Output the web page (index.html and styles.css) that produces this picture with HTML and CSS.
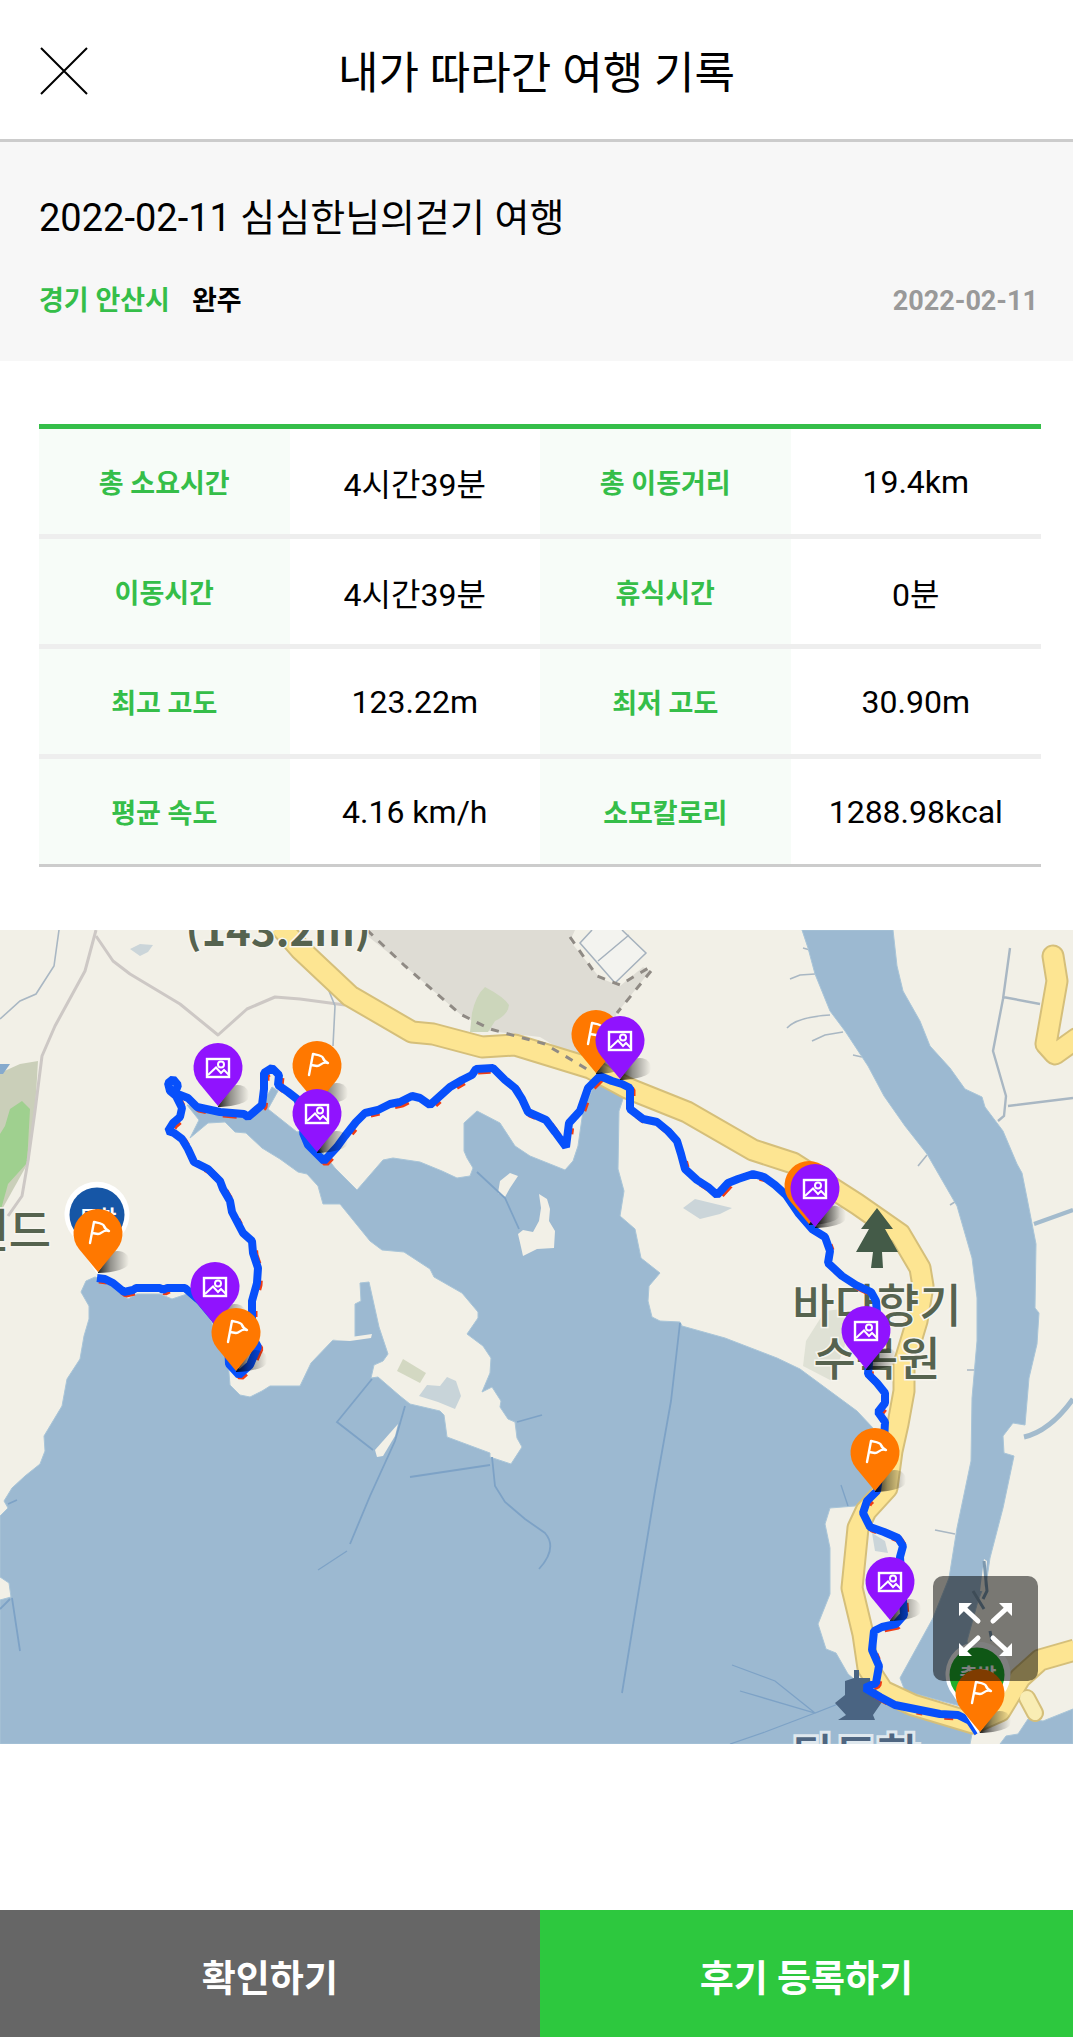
FILE: index.html
```html
<!doctype html>
<html lang="ko">
  <head>
    <meta charset="UTF-8" />
    <meta name="viewport" content="width=device-width, initial-scale=1.0" />
    <title>내가 따라간 여행 기록</title>
    <link rel="stylesheet" href="styles.css">
  </head>
  <body>
    <header class="header">
      <button type="button" class="close-button" aria-label="닫기">
        <svg viewBox="0 0 48 48" aria-hidden="true">
          <path d="M1 1 L47 47 M47 1 L1 47" />
        </svg>
      </button>
      <h1>내가 따라간 여행 기록</h1>
    </header>

    <main>
      <section class="summary">
        <h2>2022-02-11 심심한님의걷기 여행</h2>
        <div class="meta">
          <span class="region">경기 안산시</span>
          <span class="status">완주</span>
          <time class="date" datetime="2022-02-11">2022-02-11</time>
        </div>
      </section>

      <table class="record">
        <tbody>
          <tr>
            <th scope="row">총 소요시간</th>
            <td>4시간39분</td>
            <th scope="row">총 이동거리</th>
            <td>19.4km</td>
          </tr>
          <tr>
            <th scope="row">이동시간</th>
            <td>4시간39분</td>
            <th scope="row">휴식시간</th>
            <td>0분</td>
          </tr>
          <tr>
            <th scope="row">최고 고도</th>
            <td>123.22m</td>
            <th scope="row">최저 고도</th>
            <td>30.90m</td>
          </tr>
          <tr>
            <th scope="row">평균 속도</th>
            <td>4.16 km/h</td>
            <th scope="row">소모칼로리</th>
            <td>1288.98kcal</td>
          </tr>
        </tbody>
      </table>

      <div class="map">
        <svg class="map-canvas" viewBox="0 929 1073 814" role="img" aria-label="이동 경로 지도">
          <defs>
            <linearGradient id="shade" x1="0" y1="0" x2="1" y2="0">
              <stop offset="0" stop-color="#000" stop-opacity="0.85" />
              <stop offset="0.4" stop-color="#000" stop-opacity="0.4" />
              <stop offset="1" stop-color="#000" stop-opacity="0" />
            </linearGradient>
            <path id="pin" d="M0 0 L-19 -23 A24.5 24.5 0 1 1 19 -23 Z" />
            <path id="pin-shadow" d="M0 0 L14 -20 C26 -24 34 -15 30 -7 C28 -3 14 1 0 1 Z" fill="url(#shade)" />
            <g id="photo">
              <use href="#pin-shadow" />
              <use href="#pin" fill="#9013fe" />
              <g fill="none" stroke="#fff" stroke-width="2.4">
                <rect x="-11" y="-47" width="22" height="18" />
                <circle cx="3" cy="-41.5" r="3" stroke-width="2" />
                <path d="M-10 -31 L-2 -38.5 L3 -33 L6 -36 L11 -31" stroke-width="2" />
              </g>
            </g>
            <g id="flag">
              <use href="#pin-shadow" />
              <use href="#pin" fill="#ff7800" />
              <path d="M-8 -29 L-4 -50 C0 -49 5 -49 6 -46 C7 -43 9 -42 11 -41 C5 -43 4 -38 0 -38 L-6 -39" fill="none" stroke="#fff" stroke-width="2.4" stroke-linecap="round" stroke-linejoin="round" />
            </g>
            <path id="badge" d="M0 59 L-25 20 A32.5 32.5 0 1 1 25 20 Z" fill="#fff" />

            <path id="track" d="M97 1277 L105 1278 L113 1282 L124 1291 L133 1289 L136 1287 L160 1287 L163 1289 L167 1287 L185 1287 L200 1300 L215 1318 L228 1340 L229 1363 L239 1374 L250 1364 L256 1350 L258 1346 L252 1335 L252 1300 L257 1282 L258 1267 L253 1252 L252 1240 L243 1232 L232 1211 L230 1200 L223 1188 L220 1180 L208 1168 L194 1161 L188 1148 L182 1138 L174 1132 L168 1130 L173 1122 L180 1116 L182 1107 L176 1095 L170 1090 L168 1082 L173 1078 L178 1084 L175 1092 L188 1097 L197 1106 L220 1111 L244 1113 L248 1116 L262 1104 L264 1088 L264 1072 L272 1067 L279 1074 L278 1084 L288 1091 L297 1098 L307 1120 L303 1132 L308 1144 L324 1160 L337 1146 L345 1135 L356 1121 L365 1112 L378 1109 L390 1103 L400 1101 L412 1095 L420 1097 L430 1104 L440 1095 L450 1086 L462 1079 L472 1074 L476 1068 L493 1067 L505 1079 L515 1087 L522 1098 L528 1111 L546 1119 L555 1131 L566 1146 L569 1122 L580 1110 L588 1087 L600 1075 L612 1080 L622 1083 L630 1087 L630 1108 L643 1118 L657 1121 L668 1130 L677 1140 L681 1153 L685 1168 L697 1179 L708 1186 L717 1194 L728 1182 L738 1178 L753 1173 L764 1176 L775 1184 L786 1194 L799 1213 L812 1228 L825 1236 L830 1250 L828 1262 L842 1275 L856 1284 L871 1291 L876 1300 L878 1325 L870 1350 L868 1373 L877 1382 L885 1392 L885 1402 L878 1411 L885 1421 L884 1440 L877 1490 L867 1500 L863 1512 L870 1526 L884 1531 L898 1537 L903 1545 L900 1556 L903 1600 L904 1614 L896 1623 L882 1626 L874 1630 L872 1649 L879 1665 L876 1682 L865 1687 L880 1696 L895 1704 L915 1708 L940 1713 L958 1714 L970 1720 L978 1732" />
          </defs>

          <!-- land -->
          <rect x="0" y="929" width="1073" height="814" fill="#f2f0e7" />
          <path d="M360 929 L405 965 L460 1013 L490 1030 L540 1036 L590 1066 L617 1012 L650 970 L643 966 L620 985 L600 977 L570 940 L575 929 Z" fill="#dedcd4" />
          <path d="M592 929 L580 942 L615 982 L646 952 L622 929 Z" fill="#f3f3ef" />
          <path d="M592 929 L580 942 L615 982 L646 952 L622 929 M598 960 L629 934" fill="none" stroke="#a5b1bd" stroke-width="1.5" />
          <path d="M485 986 Q476 994 472 1012 L470 1031 L488 1031 L495 1020 Q508 1014 509 1004 Q504 996 485 986 Z" fill="#ccd6bb" />
          <path d="M0 1072 L20 1063 L38 1060 L35 1110 L29 1160 L0 1212 Z" fill="#cacfb9" />
          <path d="M5 1125 L10 1108 L22 1100 L30 1108 L27 1162 L8 1183 L0 1212 L0 1133 Z" fill="#9fd08f" />
          <path d="M0 1063 L10 1063 L3 1073 L0 1073 Z" fill="#86aacd" />
          <path d="M130 948 L140 943 L153 944 L148 951 L140 955 Z M683 1207 L695 1198 L732 1207 L720 1213 L700 1218 Z M872 1532 L885 1540 L888 1552 L875 1550 Z" fill="#cbd5d9" />
          <path d="M825 1310 L842 1308 L850 1330 L832 1380 L803 1365 L806 1340 Z" fill="#dfe1d5" />

          <!-- minor roads and streams -->
          <g fill="none" stroke="#cdc8c5" stroke-width="3" stroke-linejoin="round">
            <path d="M96 929 L85 970 L55 1025 L42 1055 L35 1110 L28 1160 L22 1195 L8 1215" />
            <path d="M96 935 L113 960 L130 973 L180 1003 L218 1034 L247 1008 L275 996 L300 998 L345 1004" />
          </g>
          <g fill="none" stroke="#a9b7c3" stroke-width="1.6">
            <path d="M59 929 L54 965 L36 993 L20 1000 L0 1018" />
            <path d="M327 985 L335 1005 L333 1045" />
            <path d="M790 978 L800 974 L815 973 M787 1027 Q797 1016 830 1014 M812 1040 L825 1034 L843 1031 M803 947 L810 949 M853 1054 L862 1056" />
            <path d="M1010 947 L1003 998 L993 1050 L1006 1095 L1004 1115 L998 1120 M1003 996 L1040 1003 M1008 1105 L1073 1097" stroke-width="2.4" />
            <path d="M935 1529 L955 1533 M918 1165 L927 1154 M950 1204 L958 1199 M967 1369 L976 1369" />
          </g>
          <g fill="none" stroke="#a3bbcd" stroke-width="5">
            <path d="M1034 1223 L1073 1209" stroke-width="4" />
            <path d="M1024 1436 Q1050 1430 1073 1398" />
          </g>

          <!-- sea -->
          <g fill="#9cb9d1" stroke="#a9c5d8" stroke-width="1">
            <path d="M0 1743 L0 1599 L11 1596 L9 1582 L0 1576 L0 1515 L8 1507 L4 1500 L12 1487 L25 1475 L40 1463 L45 1450 L44 1435 L53 1420 L62 1405 L67 1378 L80 1358 L84 1335 L89 1318 L89 1305 L81 1291 L86 1280 L95 1276 L104 1279 L118 1291 L128 1298 L137 1293 L160 1293 L172 1298 L190 1292 L205 1305 L215 1330 L228 1360 L230 1384 L240 1394 L250 1396 L262 1390 L270 1385 L300 1385 L311 1362 L333 1339 L355 1338 L355 1303 L361 1300 L360 1282 L369 1281 L379 1326 L388 1353 L383 1360 L374 1364 L371 1377 L378 1376 L400 1395 L410 1403 L440 1410 L444 1414 L447 1436 L490 1452 L490 1456 L511 1463 L522 1446 L517 1437 L515 1421 L508 1418 L500 1406 L501 1400 L492 1386 L482 1391 L490 1372 L491 1357 L483 1345 L467 1333 L478 1317 L478 1311 L462 1292 L434 1276 L430 1268 L404 1251 L382 1249 L370 1240 L340 1203 L323 1203 L318 1185 L307 1173 L298 1171 L280 1158 L262 1147 L246 1132 L235 1131 L225 1121 L208 1122 L190 1137 L199 1119 L187 1104 L218 1110 L248 1114 L262 1104 L272 1086 L278 1090 L268 1108 L297 1131 L305 1128 L335 1167 L357 1189 L383 1159 L393 1157 L420 1161 L442 1170 L457 1177 L470 1175 L473 1167 L467 1157 L464 1150 L464 1122 L477 1110 L500 1122 L515 1145 L530 1155 L565 1169 L573 1160 L578 1145 L583 1110 L597 1078 L625 1092 L619 1110 L618 1168 L624 1190 L620 1215 L635 1228 L641 1257 L660 1272 L649 1285 L648 1300 L652 1316 L660 1320 L680 1321 L682 1325 L725 1337 L777 1357 L800 1368 L857 1410 L873 1427 L890 1450 L886 1490 L855 1505 L830 1507 L825 1523 L830 1547 L830 1593 L818 1623 L826 1648 L836 1652 L848 1673 L880 1700 L973 1728 L970 1743 Z" />
            <path d="M802 929 L808 947 L815 973 L830 1010 L845 1030 L868 1065 L884 1095 L905 1125 L927 1153 L957 1205 L972 1257 L977 1297 L977 1340 L972 1397 L971 1460 L957 1527 L949 1577 L933 1617 L900 1677 L905 1690 L960 1705 L975 1690 L967 1640 L978 1600 L987 1577 L990 1557 L1003 1507 L1014 1455 L1004 1452 L1003 1435 L1013 1422 L1025 1424 L1029 1377 L1037 1343 L1039 1312 L1035 1307 L1036 1243 L1027 1197 L1022 1172 L1017 1163 L1003 1130 L985 1106 L982 1096 L965 1088 L950 1067 L930 1045 L920 1020 L903 990 L897 965 L893 929 Z" />
            <path d="M1000 1743 L1006 1735 L1018 1733 L1028 1718 L1043 1720 L1073 1708 L1073 1743 Z" />
          </g>

          <!-- islets and breakwaters -->
          <g fill="#f2f0e7">
            <path d="M500 1180 L510 1172 L518 1175 L510 1187 L505 1196 L498 1192 Z" />
            <path d="M539 1193 L547 1198 L550 1208 L549 1220 L555 1230 L554 1247 L537 1248 L523 1255 L521 1246 L518 1233 L523 1229 L533 1231 L539 1220 L541 1207 Z" />
            <path d="M398 1423 L395 1435 L383 1455 L377 1456 L375 1449 Z" />
            <path d="M330 1339 L372 1333 L371 1337 L350 1340 Z" />
            <path d="M984 1558 L987 1560 L984 1590 L980 1590 Z" />
          </g>
          <path d="M403 1358 L426 1372 L420 1382 L397 1370 Z" fill="#d3d8c2" />
          <path d="M419 1395 L427 1384 L440 1385 L447 1376 L456 1380 L461 1395 L455 1408 L438 1401 Z" fill="#c8d4d9" />
          <g fill="none" stroke="#7da2c6" stroke-width="1.8">
            <path d="M405 1405 L395 1440 L370 1495 L350 1543" />
            <path d="M347 1550 L318 1569" stroke-width="1.2" />
            <path d="M372 1378 L337 1421 L373 1449" />
            <path d="M490 1464 L410 1476" />
            <path d="M492 1456 L495 1485 L505 1501 L525 1518 L545 1532 Q558 1547 539 1568" />
            <path d="M517 1421 L542 1414" />
            <path d="M680 1322 L671 1400 L655 1490 L637 1600 L622 1692" />
            <path d="M477 1171 L505 1197 L519 1228" />
            <path d="M732 1664 L775 1680 L815 1712 M740 1690 L815 1712 L838 1703 M730 1743 L765 1731 L815 1712" stroke-width="1.3" />
            <path d="M841 1484 L848 1505" stroke-width="1.3" />
            <path d="M12 1597 L20 1650 M10 1598 L0 1608 M8 1503 L17 1499" />
          </g>
          <path d="M984 1560 L987 1590 L983 1598 M973 1590 L984 1608 M990 1630 L992 1640" fill="none" stroke="#7c98ae" stroke-width="3" />

          <!-- main roads -->
          <g fill="none" stroke-linejoin="round">
            <g stroke="#d5bf7a" stroke-width="23">
              <path d="M280 925 L300 948 L350 995 L412 1031 L433 1033 L482 1046 L515 1044 L590 1067 L627 1087 L687 1111 L753 1149 L793 1162 L857 1203 L900 1233 L920 1267 L923 1285 L917 1320 L904 1363 L904 1390 L898 1423 L892 1450 L887 1487 L866 1510 L858 1527 L852 1587 L863 1633 L868 1667 L883 1690 L913 1704 L973 1722 L1000 1710 L1020 1677 L1040 1659 L1075 1649" />
              <path d="M1053 955 L1057 980 L1050 1020 L1046 1043 L1055 1053 L1076 1038" stroke-linecap="round" />
              <path d="M1027 1697 L1035 1712" stroke-width="18" stroke-linecap="round" />
            </g>
            <g stroke="#fde592" stroke-width="19">
              <path d="M280 925 L300 948 L350 995 L412 1031 L433 1033 L482 1046 L515 1044 L590 1067 L627 1087 L687 1111 L753 1149 L793 1162 L857 1203 L900 1233 L920 1267 L923 1285 L917 1320 L904 1363 L904 1390 L898 1423 L892 1450 L887 1487 L866 1510 L858 1527 L852 1587 L863 1633 L868 1667 L883 1690 L913 1704 L973 1722 L1000 1710 L1020 1677 L1040 1659 L1075 1649" />
              <path d="M1053 955 L1057 980 L1050 1020 L1046 1043 L1055 1053 L1076 1038" stroke-linecap="round" />
              <path d="M1027 1697 L1035 1712" stroke="#f9edb4" stroke-width="14" stroke-linecap="round" />
            </g>
          </g>
          <g fill="none" stroke="#8f8a84" stroke-width="3" stroke-dasharray="8 8">
            <path d="M367 929 L405 965 L460 1013 L490 1028 L545 1043 L590 1070" />
            <path d="M570 936 L597 975 L620 984 L650 966" />
            <path d="M651 970 L617 1012" />
          </g>

          <!-- place names -->
          <g class="map-label">
            <text x="278" y="945" font-size="42" font-weight="700" text-anchor="middle">(143.2m)</text>
            <text x="51" y="1246" text-anchor="end">랜드</text>
            <text x="877" y="1321" text-anchor="middle">바다향기</text>
            <text x="877" y="1374" text-anchor="middle">수목원</text>
            <text class="harbor" x="856" y="1771" text-anchor="middle">탄도항</text>
          </g>
          <path d="M877 1207 L893 1228 L885 1228 L898 1251 L882 1251 L883 1267 L871 1267 L873 1251 L856 1251 L869 1228 L861 1228 Z" fill="#445b48" />
          <path d="M854 1669 L859 1669 L859 1677 L870 1677 L871 1691 L882 1701 L873 1714 L875 1719 L838 1719 L846 1714 L835 1702 L845 1694 L845 1680 L854 1677 Z" fill="#4a6482" />

          <!-- walked track -->
          <g fill="none" stroke-linejoin="bevel">
            <use href="#track" x="2" y="2" stroke="#f03c14" stroke-width="7" stroke-dasharray="9 17 14 31 6 22" />
            <use href="#track" stroke="#0750fb" stroke-width="8" />
          </g>

          <!-- markers -->
          <use href="#badge" x="97" y="1214" />
          <circle cx="97" cy="1214" r="27.5" fill="#1656a6" />
          <text class="badge-text" x="98" y="1224">도착</text>
          <use href="#photo" x="218" y="1105" />
          <use href="#flag" x="317" y="1103" />
          <use href="#photo" x="317" y="1151" />
          <use href="#flag" x="98" y="1271" />
          <use href="#photo" x="215" y="1324" />
          <use href="#flag" x="236" y="1370" />
          <use href="#flag" x="596" y="1072" />
          <use href="#photo" x="620" y="1078" />
          <use href="#flag" x="809" y="1223" />
          <use href="#photo" x="815" y="1226" />
          <use href="#photo" x="866" y="1368" />
          <use href="#flag" x="875" y="1490" />
          <use href="#photo" x="890" y="1619" />
          <use href="#badge" x="978" y="1674" />
          <circle cx="977" cy="1674" r="27.5" fill="#1fae2b" />
          <text class="badge-text" x="978" y="1682">출발</text>
          <use href="#flag" x="980" y="1731" />
        </svg>
        <button type="button" class="expand-button" aria-label="지도 크게 보기">
          <svg viewBox="0 0 105 105" aria-hidden="true">
            <path d="M31 32 L45 45 M74 32 L60 45 M31 75 L45 62 M74 75 L60 62" stroke="#fff" stroke-width="5" stroke-linecap="round" />
            <path d="M26 27 H39 L26 40 Z M79 27 H66 L79 40 Z M26 80 H39 L26 67 Z M79 80 H66 L79 67 Z" fill="#fff" />
          </svg>
        </button>
      </div>
    </main>

    <footer class="actions">
      <button type="button" class="confirm">확인하기</button>
      <button type="button" class="review">후기 등록하기</button>
    </footer>
  </body>
</html>
```

FILE: styles.css
```css
:root {
  --green: #35be49;
  --button-green: #2dc83e;
  --gray: #666666;
  --line: #cccccc;
}

* {
  margin: 0;
  padding: 0;
  box-sizing: border-box;
}

body {
  font-family: Roboto, "Noto Sans CJK KR", sans-serif;
  background-color: #ffffff;
  color: #000000;
  min-height: 100vh;
  display: flex;
  flex-direction: column;
}

button {
  border: none;
  background: none;
  font-family: inherit;
  cursor: pointer;
}

.header {
  display: grid;
  grid-template-columns: 48px 1fr 48px;
  align-items: center;
  height: 142px;
  padding: 2px 40px 0;
  border-bottom: 3px solid var(--line);
}

.close-button {
  width: 48px;
  height: 48px;
}

.close-button svg {
  display: block;
  fill: none;
  stroke: #000000;
  stroke-width: 2;
}

h1 {
  padding-top: 6px;
  font-size: 44px;
  font-weight: 400;
  line-height: 64px;
  text-align: center;
}

.summary {
  padding: 46px 35px 40px 39px;
  background-color: #f7f7f7;
}

h2 {
  font-size: 38px;
  font-weight: 400;
  line-height: 60px;
}

.meta {
  display: flex;
  align-items: center;
  gap: 22px;
  margin-top: 33px;
  font-size: 27px;
  font-weight: 700;
  line-height: 40px;
}

.region {
  color: var(--green);
}

.date {
  margin-left: auto;
  color: #999999;
}

.record {
  width: calc(100% - 71px);
  margin: 63px 32px 0 39px;
  table-layout: fixed;
  border-collapse: separate;
  border-spacing: 0;
  border-top: 5px solid var(--green);
  border-bottom: 3px solid var(--line);
}

.record th,
.record td {
  width: 25%;
  height: 110px;
  text-align: center;
  vertical-align: middle;
  border-bottom: 5px solid #eeeeee;
}

.record tr:last-child > * {
  height: 105px;
  border-bottom: none;
}

.record th {
  background-color: #f7fcf8;
  color: var(--green);
  font-size: 27px;
  font-weight: 700;
}

.record td {
  font-size: 32px;
}

.map {
  position: relative;
  margin: 63px 0 64px;
}

.map-canvas {
  display: block;
  width: 100%;
  height: auto;
}

.map-label {
  font-family: "Noto Sans CJK KR", sans-serif;
  font-size: 46px;
  font-weight: 500;
  fill: #56634f;
  stroke: #f6f5ee;
  stroke-width: 3px;
  paint-order: stroke;
}

.harbor {
  fill: #4f6681;
  stroke: #dfe8ee;
  stroke-width: 6px;
}

.badge-text {
  font-size: 20px;
  font-weight: 700;
  fill: #ffffff;
  text-anchor: middle;
}

.expand-button {
  position: absolute;
  right: 35px;
  bottom: 63px;
  width: 105px;
  height: 105px;
  border-radius: 10px;
  background-color: rgba(0, 0, 0, 0.5);
}

.expand-button svg {
  display: block;
}

.actions {
  display: flex;
  height: 127px;
  margin-top: auto;
}

.actions button {
  flex: 1;
  padding-top: 4px;
  color: #ffffff;
  font-size: 37px;
  font-weight: 700;
}

.actions .confirm {
  flex: 0 0 540px;
  max-width: 50.3%;
  background-color: var(--gray);
}

.actions .review {
  background-color: var(--button-green);
}
```
